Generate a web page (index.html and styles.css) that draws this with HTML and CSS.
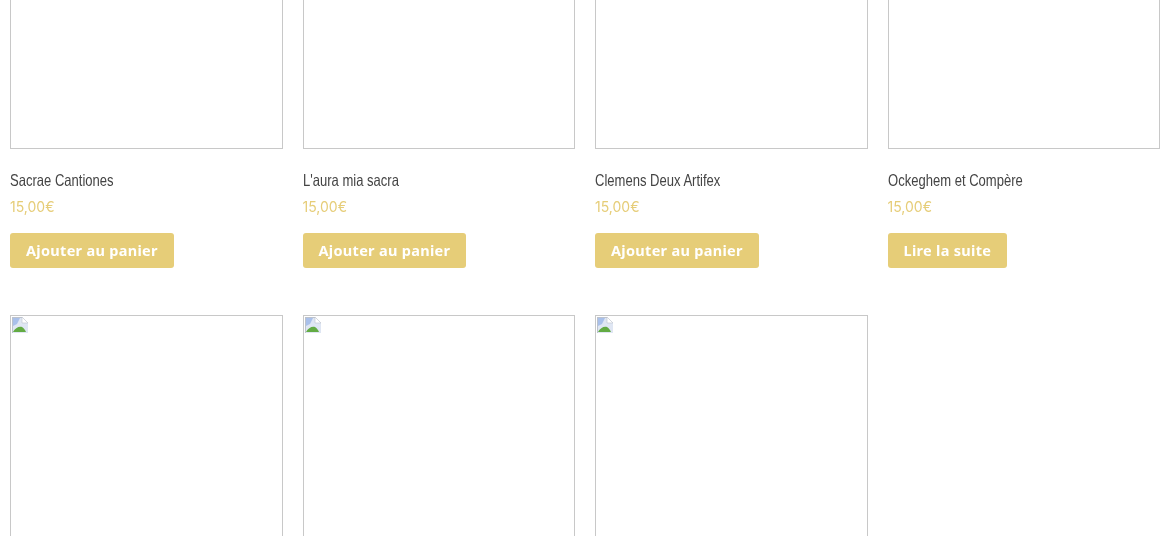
FILE: index.html
```html
<!DOCTYPE html>
<html lang="fr">
<head>
<meta charset="utf-8">
<title>Boutique</title>
<link rel="stylesheet" href="styles.css">
</head>
<body>
<main class="grid">
  <article class="card">
    <div class="thumb"></div>
    <h2 class="name">Sacrae Cantiones</h2>
    <p class="price">15,00€</p>
    <a class="btn">Ajouter au panier</a>
  </article>
  <article class="card">
    <div class="thumb"></div>
    <h2 class="name">L'aura mia sacra</h2>
    <p class="price">15,00€</p>
    <a class="btn">Ajouter au panier</a>
  </article>
  <article class="card">
    <div class="thumb"></div>
    <h2 class="name">Clemens Deux Artifex</h2>
    <p class="price">15,00€</p>
    <a class="btn">Ajouter au panier</a>
  </article>
  <article class="card">
    <div class="thumb"></div>
    <h2 class="name">Ockeghem et Compère</h2>
    <p class="price">15,00€</p>
    <a class="btn">Lire la suite</a>
  </article>
  <article class="card">
    <div class="thumb">
      <svg class="broken" viewBox="0 0 16 16" aria-hidden="true"><path d="M0 0H10L16 6V16H0Z" fill="#dfe6f3"/><path d="M0 1H8L5 7 1 9Z" fill="#a9c0ea"/><path d="M10 0V6H16Z" fill="#fff" stroke="#c3c8d2" stroke-width=".7"/><path d="M1 15C3 11 7 9 10 10 12 11 13 13 14 15Z" fill="#63ab43"/><path d="M0 0H10V1H1V16H0Z" fill="#bcc2cc"/></svg>
    </div>
  </article>
  <article class="card">
    <div class="thumb">
      <svg class="broken" viewBox="0 0 16 16" aria-hidden="true"><path d="M0 0H10L16 6V16H0Z" fill="#dfe6f3"/><path d="M0 1H8L5 7 1 9Z" fill="#a9c0ea"/><path d="M10 0V6H16Z" fill="#fff" stroke="#c3c8d2" stroke-width=".7"/><path d="M1 15C3 11 7 9 10 10 12 11 13 13 14 15Z" fill="#63ab43"/><path d="M0 0H10V1H1V16H0Z" fill="#bcc2cc"/></svg>
    </div>
  </article>
  <article class="card">
    <div class="thumb">
      <svg class="broken" viewBox="0 0 16 16" aria-hidden="true"><path d="M0 0H10L16 6V16H0Z" fill="#dfe6f3"/><path d="M0 1H8L5 7 1 9Z" fill="#a9c0ea"/><path d="M10 0V6H16Z" fill="#fff" stroke="#c3c8d2" stroke-width=".7"/><path d="M1 15C3 11 7 9 10 10 12 11 13 13 14 15Z" fill="#63ab43"/><path d="M0 0H10V1H1V16H0Z" fill="#bcc2cc"/></svg>
    </div>
  </article>
</main>
</body>
</html>
```
FILE: styles.css
```css
html, body {
  margin: 0;
  height: 536px;
  overflow: hidden;
  background: #fff;
}
.grid {
  display: grid;
  grid-template-columns: repeat(4, 1fr);
  column-gap: 20px;
  row-gap: 47px;
  padding: 0 10px;
  margin-top: -124px;
  filter: blur(0.4px);
}
.card {
  display: flex;
  flex-direction: column;
  align-items: flex-start;
}
.thumb {
  box-sizing: border-box;
  width: 100%;
  height: 273px;
  border: 1px solid #c8c8c8;
  padding: 1px;
}
.broken {
  display: block;
  width: 16px;
  height: 16px;
}
.name {
  margin: 22px 0 0;
  font: 400 16.5px/18px "Liberation Sans", sans-serif;
  padding-bottom: 2px;
  color: #444;
  white-space: nowrap;
  transform: scaleX(0.79);
  transform-origin: left center;
}
.price {
  margin: 6px 0 0;
  font: 400 14px/20px "Inter", "Noto Sans", sans-serif;
  color: #e6cd78;
}
.btn {
  margin-top: 16px;
  padding: 0 16px;
  height: 35px;
  line-height: 35px;
  border-radius: 3px;
  background: #e6cd78;
  color: #fff;
  font-family: "Noto Sans", sans-serif;
  font-weight: 700;
  font-size: 14.5px;
  letter-spacing: 0.3px;
}
```
